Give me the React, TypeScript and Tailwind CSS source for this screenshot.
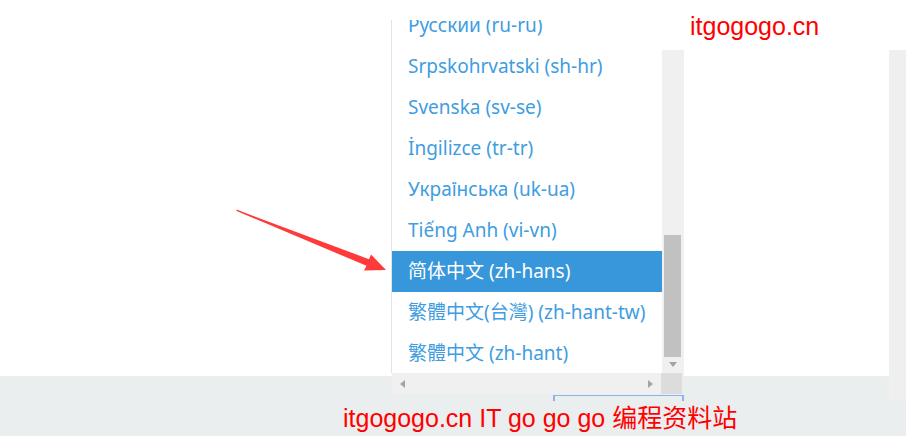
import React from "react";

const items = [
  "Русский (ru-ru)",
  "Srpskohrvatski (sh-hr)",
  "Svenska (sv-se)",
  "İngilizce (tr-tr)",
  "Українська (uk-ua)",
  "Tiếng Anh (vi-vn)",
  "简体中文 (zh-hans)",
  "繁體中文(台灣) (zh-hant-tw)",
  "繁體中文 (zh-hant)",
];

export default function App() {
  return (
    <div
      className="relative w-[906px] h-[436px] overflow-hidden bg-white"
      style={{ fontFamily: '"Noto Sans", "Noto Sans CJK SC", sans-serif' }}
    >
      {/* page background structure */}
      <div className="flex h-[376px] pt-[50px]">
        <div className="w-[662px]" />
        <div className="w-[22px] bg-[#f0f0f0]" />
        <div className="w-[205px]" />
        <div className="w-[17px] h-[351px] bg-[#f0efef]" />
      </div>
      <div className="flex h-[60px] bg-[#eaeeef]">
        <div className="flex-1 pl-[553px] pt-[19px]">
          <div className="w-[131px] h-[6px] border-t border-x-2 border-[#8ab4f0]" />
        </div>
        <div className="w-[17px]">
          <div className="h-[25px] bg-[#f0efef]" />
        </div>
      </div>

      {/* dropdown list */}
      <div className="absolute left-[391px] top-[20px] w-[293px] flex flex-col">
        <div className="flex h-[353px]">
          <div className="w-[271px] border-l border-[#e3e3e3] bg-white overflow-hidden">
            <div className="-mt-[15px]">
              {items.map((t, i) => (
                <div
                  key={i}
                  className={
                    "h-[41px] flex items-center pl-[16px] text-[19px] whitespace-nowrap " +
                    (i === 6 ? "bg-[#3897db] text-white" : "text-[#409ddf]")
                  }
                >
                  {t}
                </div>
              ))}
            </div>
          </div>
          <div className="w-[22px] flex flex-col pt-[215px] pl-[2px]">
            <div className="w-[17px] h-[122px] bg-[#c1c1c1]" />
            <div className="w-[17px] h-[15px] flex items-center justify-center">
              <div className="w-0 h-0 border-x-[4px] border-x-transparent border-t-[5px] border-t-[#a3a3a3]" />
            </div>
          </div>
        </div>
        <div className="flex h-[21px] ml-[1px]">
          <div className="w-[269px] bg-[#f0f0f0] flex items-center justify-between px-[8px]">
            <div className="w-0 h-0 border-y-[4.5px] border-y-transparent border-r-[5px] border-r-[#a3a3a3]" />
            <div className="w-0 h-0 border-y-[4.5px] border-y-transparent border-l-[5px] border-l-[#a3a3a3]" />
          </div>
          <div className="w-[21px] bg-[#dcdcdc]" />
        </div>
      </div>

      {/* red annotation arrow */}
      <svg
        className="absolute left-0 top-0 pointer-events-none"
        width="906"
        height="436"
        viewBox="0 0 906 436"
      >
        <polygon
          points="236.5,209.6 369,259.2 371,254.5 386,270 364,270.5 366.5,265.8 236.6,211"
          fill="#ff3a3a"
        />
      </svg>

      {/* watermark texts */}
      <div
        className="absolute left-[690px] top-[14px] text-[25px] leading-none text-[#ff0000] whitespace-nowrap"
        style={{ fontFamily: '"Liberation Sans", Arial, sans-serif' }}
      >
        itgogogo.cn
      </div>
      <div
        className="absolute left-[343px] top-[406px] text-[25px] leading-none text-[#ff0000] whitespace-nowrap"
        style={{ fontFamily: '"Liberation Sans", "Noto Sans CJK SC", sans-serif' }}
      >
        itgogogo.cn IT go go go 编程资料站
      </div>
    </div>
  );
}
